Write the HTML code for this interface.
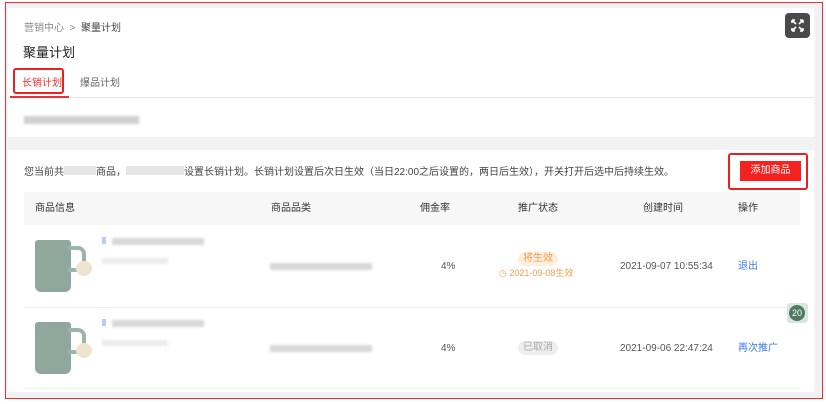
<!DOCTYPE html><html><head><meta charset="utf-8"><style>
*{margin:0;padding:0;box-sizing:border-box}
body{width:826px;height:404px;background:#fff;font-family:"Liberation Sans","Noto Sans CJK SC",sans-serif;position:relative;overflow:hidden;color:#333}
.a{position:absolute}
.blur{position:absolute;background:#d8d8d8;filter:blur(1.2px)}
.t{font-size:10px;white-space:nowrap;line-height:12px}
</style></head><body>
<div class="a" style="left:5px;top:2px;width:818px;height:397px;border:1.5px solid #f03030;background:#f2f2f4"></div>
<div class="a" style="left:8px;top:8px;width:806px;height:129px;background:#fff"></div>
<div class="a t" style="left:24px;top:23px;color:#888;font-size:10px">营销中心 &nbsp;&gt;&nbsp; <span style="color:#444">聚量计划</span></div>
<div class="a" style="left:23px;top:42px;font-size:13px;color:#222">聚量计划</div>
<div class="a" style="left:785px;top:13px;width:25px;height:25px;background:#4a4a4a;border-radius:4px">
<svg width="25" height="25" viewBox="0 0 25 25" stroke="#fff" stroke-width="1.6" fill="none"><path d="M7 7l4 4M7 7h3M7 7v3M18 7l-4 4M18 7h-3M18 7v3M7 18l4-4M7 18h3M7 18v-3M18 18l-4-4M18 18h-3M18 18v-3"/></svg></div>
<div class="a" style="left:8px;top:97px;width:806px;height:1px;background:#e8e8e8"></div>
<div class="a" style="left:10px;top:96px;width:59px;height:2px;background:#f03030"></div>
<div class="a" style="left:13px;top:68px;width:51px;height:26px;border:2px solid #e82020;border-radius:3px"></div>
<div class="a t" style="left:22px;top:78px;color:#f03030">长销计划</div>
<div class="a t" style="left:80px;top:78px;color:#666">爆品计划</div>
<div class="blur" style="left:24px;top:116px;width:115px;height:8px;background:#d0d0d0"></div>
<div class="a" style="left:8px;top:150px;width:806px;height:242px;background:#fff"></div>
<div class="a t" style="left:24px;top:166px;color:#444">您当前共<span style="display:inline-block;width:32px;height:9px;background:#e6e6e6"></span>商品，<span style="display:inline-block;width:58px;height:9px;background:#e6e6e6"></span>设置长销计划。长销计划设置后次日生效（当日22:00之后设置的，两日后生效），开关打开后选中后持续生效。</div>
<div class="a" style="left:728px;top:153px;width:80px;height:37px;border:2px solid #e82020;border-radius:3px"></div>
<div class="a t" style="left:740px;top:161px;width:61px;height:20px;background:#f52020;color:#fff;text-align:center;line-height:20px">添加商品</div>
<div class="a" style="left:24px;top:192px;width:776px;height:33px;background:#f7f7f7"></div>
<div class="a t" style="left:35px;top:203px;color:#333">商品信息</div>
<div class="a t" style="left:271px;top:203px;color:#333">商品品类</div>
<div class="a t" style="left:420px;top:203px;color:#333">佣金率</div>
<div class="a t" style="left:518px;top:203px;color:#333">推广状态</div>
<div class="a t" style="left:643px;top:203px;color:#333">创建时间</div>
<div class="a t" style="left:738px;top:203px;color:#333">操作</div>
<div class="a" style="left:24px;top:307px;width:776px;height:1px;background:#eee"></div>
<div class="a" style="left:24px;top:388px;width:776px;height:1px;background:#eee"></div>
<div class="a" style="left:35px;top:240px;width:36px;height:52px;background:#8fa79c;border-radius:3px 3px 6px 6px"></div>
<div class="a" style="left:68px;top:246px;width:18px;height:26px;border:4px solid #9cb5aa;border-left:none;border-radius:0 8px 8px 0"></div>
<div class="a" style="left:76px;top:261px;width:16px;height:15px;background:#efe4cf;border-radius:50%"></div>
<div class="a" style="left:35px;top:322px;width:36px;height:52px;background:#8fa79c;border-radius:3px 3px 6px 6px"></div>
<div class="a" style="left:68px;top:328px;width:18px;height:26px;border:4px solid #9cb5aa;border-left:none;border-radius:0 8px 8px 0"></div>
<div class="a" style="left:76px;top:343px;width:16px;height:15px;background:#efe4cf;border-radius:50%"></div>
<div class="a" style="left:102px;top:237px;width:4px;height:7px;background:#b8cdf5"></div>
<div class="blur" style="left:112px;top:238px;width:92px;height:7px"></div>
<div class="blur" style="left:102px;top:258px;width:66px;height:6px;background:#ececec"></div>
<div class="blur" style="left:270px;top:263px;width:102px;height:7px"></div>
<div class="a" style="left:102px;top:319px;width:4px;height:7px;background:#b8cdf5"></div>
<div class="blur" style="left:112px;top:320px;width:92px;height:7px"></div>
<div class="blur" style="left:102px;top:340px;width:66px;height:6px;background:#ececec"></div>
<div class="blur" style="left:270px;top:345px;width:102px;height:7px"></div>
<div class="a t" style="left:441px;top:261px;color:#555">4%</div>
<div class="a t" style="left:441px;top:343px;color:#555">4%</div>
<div class="a t" style="left:518px;top:252px;background:#fdeede;color:#f0a050;border-radius:8px;padding:1px 5px">将生效</div>
<div class="a t" style="left:499px;top:267px;color:#f0a050;font-size:9px">◷ 2021-09-08生效</div>
<div class="a t" style="left:518px;top:341px;background:#eee;color:#aaa;border-radius:8px;padding:1px 5px">已取消</div>
<div class="a t" style="left:620px;top:261px;color:#555">2021-09-07 10:55:34</div>
<div class="a t" style="left:620px;top:343px;color:#555">2021-09-06 22:47:24</div>
<div class="a t" style="left:738px;top:261px;color:#3a7bea">退出</div>
<div class="a t" style="left:738px;top:343px;color:#3a7bea">再次推广</div>
<div class="a" style="left:787px;top:303px;width:21px;height:20px;background:#dbe5df;border-radius:3px"><div style="margin:2px;width:16px;height:16px;border-radius:50%;background:#4d7a63;color:#fff;font-size:9px;text-align:center;line-height:16px">20</div></div>
</body></html>
